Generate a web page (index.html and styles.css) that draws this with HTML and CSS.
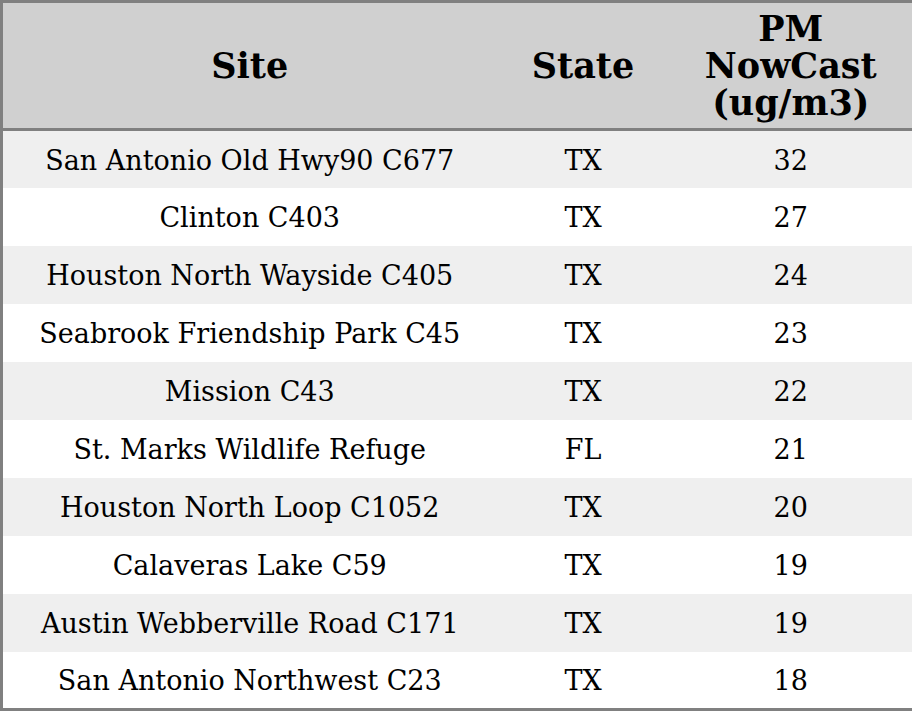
FILE: index.html
```html
<!DOCTYPE html>
<html>
<head>
<meta charset="utf-8">
<link rel="stylesheet" href="styles.css">
</head>
<body>
<table class="aq">
  <colgroup>
    <col class="c-site">
    <col class="c-state">
    <col class="c-pm">
  </colgroup>
  <thead>
    <tr><th>Site</th><th>State</th><th>PM<br>NowCast<br>(ug/m3)</th></tr>
  </thead>
  <tbody>
    <tr class="first"><td>San Antonio Old Hwy90 C677</td><td>TX</td><td>32</td></tr>
    <tr><td>Clinton C403</td><td>TX</td><td>27</td></tr>
    <tr><td>Houston North Wayside C405</td><td>TX</td><td>24</td></tr>
    <tr><td>Seabrook Friendship Park C45</td><td>TX</td><td>23</td></tr>
    <tr><td>Mission C43</td><td>TX</td><td>22</td></tr>
    <tr><td>St. Marks Wildlife Refuge</td><td>FL</td><td>21</td></tr>
    <tr><td>Houston North Loop C1052</td><td>TX</td><td>20</td></tr>
    <tr><td>Calaveras Lake C59</td><td>TX</td><td>19</td></tr>
    <tr><td>Austin Webberville Road C171</td><td>TX</td><td>19</td></tr>
    <tr class="last"><td>San Antonio Northwest C23</td><td>TX</td><td>18</td></tr>
  </tbody>
</table>
</body>
</html>
```
FILE: styles.css
```css
html, body {
  margin: 0;
  padding: 0;
  background: #ffffff;
}
.aq {
  width: 912px;
  border-collapse: collapse;
  table-layout: fixed;
  border: 3px solid #808080;
  font-family: "DejaVu Serif", serif;
  color: #000;
}
.c-site { width: 495px; }
.c-state { width: 173px; }
.c-pm { width: 244px; }
.aq thead th {
  background: #d0d0d0;
  font-size: 35px;
  font-weight: bold;
  line-height: 37px;
  height: 125px;
  padding: 0;
  text-align: center;
  vertical-align: middle;
  border-bottom: 3px solid #808080;
}
.aq tbody td {
  font-size: 27px;
  line-height: 32px;
  height: 55px;
  padding: 3px 0 0;
  text-align: center;
  vertical-align: middle;
}
.aq tbody tr.first td,
.aq tbody tr.last td {
  height: 53.5px;
}
.aq tbody tr:nth-child(odd) td {
  background: #efefef;
}
```
